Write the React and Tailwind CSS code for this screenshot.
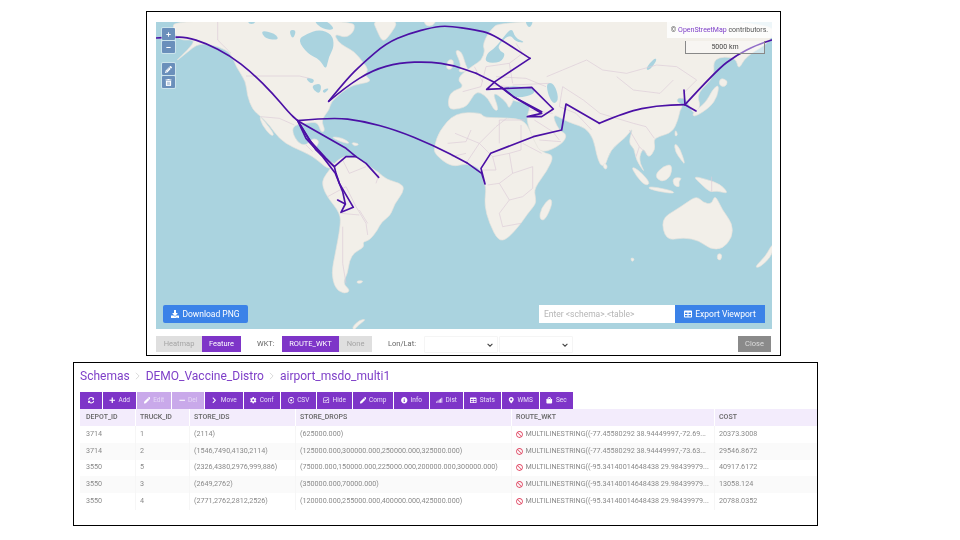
import React from 'react';
import {
  FaBan, FaChevronRight, FaCog, FaDownload, FaInfoCircle, FaMapMarkerAlt, FaMinus, FaPen,
  FaPencilAlt, FaPlus, FaRegCheckSquare, FaRegDotCircle, FaShoppingBag, FaSignal, FaSyncAlt, FaTable, FaTrashAlt,
} from 'react-icons/fa';

const land = [
  // north america
  '85,30 620,30 628,60 600,85 565,70 575,95 600,112 625,125 650,155 668,180 655,195 680,215 620,225 590,245 555,275 550,300 525,330 538,362 525,368 515,335 480,340 445,345 438,365 455,398 480,408 500,383 522,393 505,418 530,440 555,458 570,462 550,482 500,437 440,412 400,387 370,345 345,320 320,300 303,255 300,215 270,170 255,130 220,110 160,98 120,130 85,158 125,120 150,88 100,92 80,60',
  '340,316 355,333 386,374 375,378 348,345',
  '680,30 760,30 732,75 710,98 692,60',
  '832,30 872,30 860,48 840,48',
  '552,380 590,383 615,402 585,396',
  '615,396 642,402 625,410',
  // south america
  '560,465 590,438 630,438 660,463 700,488 720,508 772,523 772,547 745,582 735,615 705,637 695,660 670,692 650,695 655,712 625,727 610,752 605,790 590,820 614,842 595,852 568,836 556,790 568,730 583,650 583,610 543,560 528,525 533,503 548,483',
  '633,812 652,812 646,820 633,820',
  '618,952 640,930 662,927 635,947 625,960',
  // africa
  '927,308 1007,308 1012,323 1082,323 1137,330 1162,385 1187,428 1225,435 1204,482 1164,535 1169,565 1169,582 1144,612 1124,642 1084,687 1057,693 1030,640 1015,585 1020,540 1017,524 1012,515 1005,477 962,459 917,472 865,432 865,408 880,363',
  '1212,563 1220,580 1197,632 1180,627 1185,595',
  // eurasia
  '1067,30 1880,30 1880,93 1800,138 1777,182 1770,140 1700,143 1707,200 1652,250 1664,290 1646,312 1632,295 1622,268 1598,262 1590,275 1612,285 1602,300 1596,330 1579,367 1537,380 1522,390 1529,417 1507,447 1492,410 1477,450 1499,492 1470,450 1465,415 1447,400 1462,350 1442,380 1392,420 1377,472 1357,460 1337,360 1262,335 1217,308 1237,360 1264,373 1249,402 1187,432 1165,395 1140,330 1150,300 1152,281 1092,271 1107,259 1102,271 1089,298 1082,276 1037,241 1059,300 1045,302 1027,266 1002,246 985,250 965,287 940,297 905,298 910,246 957,231 930,206 982,166 1007,151 1017,121 1010,106 1027,66',
  '925,119 947,124 959,166 969,183 935,188 947,166',
  '905,149 924,149 919,178 900,178',
  // japan and islands
  '1719,223 1714,260 1692,292 1645,322 1638,310 1680,278 1700,238',
  '1723,203 1747,213 1737,232 1718,225',
  '1588,358 1596,375 1586,380',
  '1585,398 1602,415 1619,467 1603,447 1588,425',
  '1525,497 1552,468 1579,463 1574,502 1547,517',
  '1455,468 1482,483 1514,520 1497,527 1470,497',
  '1510,528 1584,543 1582,552 1508,538',
  '1580,503 1609,503 1597,515 1602,532 1583,527',
  '1640,498 1682,508 1724,523 1749,552 1712,542 1692,547 1665,522',
  '1545,627 1592,598 1622,578 1652,558 1672,578 1697,583 1707,553 1729,600 1759,640 1759,682 1729,717 1692,717 1660,692 1612,682 1560,692',
  '1715,730 1729,733 1724,752 1713,747',
  '1880,698 1880,735 1842,772 1825,772 1862,735',
  '1375,458 1385,468 1380,480 1370,470',
  '1453,743 1467,746 1458,757',
];

// seas drawn over the land polygons
const water = [
  '455,90 480,72 520,58 558,72 565,110 548,140 540,182 522,148 485,132',
  '476,203 507,206 498,224',
  '498,225 527,220 522,252 503,242',
  '528,240 552,233 535,252',
  '343,60 387,70 400,90 358,87',
  '428,60 452,60 440,90',
  '500,30 540,30 570,60 530,58',
  '305,30 330,30 325,42 308,42',
  '1015,158 1064,158 1079,131 1062,124 1055,106 1092,72 1109,96 1140,98 1107,84 1097,50 1060,98 1040,120 1025,128',
  '1135,30 1164,30 1150,58',
  '1070,232 1100,228 1162,233 1167,252 1120,264 1088,257',
  '1200,218 1224,220 1239,265 1225,284 1208,260',
  '1498,177 1525,143 1534,150 1510,182',
];

const borders = [
  '215,36 215,90 255,130', '300,198 460,198 490,205', '345,320 400,325 445,345', '480,405 500,425',
  // africa, from the coast inward
  '927,370 1000,400 1050,350 1082,325', '1000,400 1040,440 1090,430 1125,420', '962,457 1000,400', '1040,440 1050,480 1012,480',
  '1090,430 1100,490 1060,520 1025,525', '1100,490 1160,470 1160,535', '1060,520 1090,570 1130,560 1160,535', '1090,570 1060,610 1070,650 1125,640',
  '1137,330 1060,330 1060,400', '1130,400 1187,430', '905,400 960,395 975,360', '917,440 960,430', '1125,345 1125,420',
  // south america
  '590,450 610,490 660,470', '545,560 600,530 630,590 660,640 665,675', '585,610 640,615', '590,650 590,760 600,820', '665,640 640,600', '700,490 690,520',
  // europe and asia
  '950,245 1005,230 1020,170', '1020,170 1090,160 1100,220', '1050,200 1140,205 1200,230', '1100,225 1210,220', '985,170 1010,215', '1090,160 1130,130 1110,100', '1040,225 1090,230',
  '1202,200 1250,180 1322,150 1370,180 1442,190 1532,165 1592,170 1652,210 1612,250', '1412,200 1462,240 1542,250 1582,210',
  '1250,230 1312,270 1362,310 1462,340', '1240,290 1290,310 1337,360', '1150,300 1220,310', '1165,330 1220,365 1240,390', '1250,230 1240,290',
  '1450,360 1480,410 1500,430', '1462,340 1500,350 1525,385', '1480,410 1470,440', '1180,390 1245,395',
  '1697,500 1697,545',
];

// great-circle arcs, drawn smooth
const arcs = [
  '30,84 75,82 120,81 180,100 250,135 320,190 380,250 430,310 455,332',
  '548,274 600,210 650,160 720,100 790,70 860,52 905,47 990,60 1032,70 1082,100 1152,145',
  '548,274 600,230 680,180 760,158 850,155 920,165 990,190',
  '455,332 560,322 650,333 750,360 860,405 962,458',
  '1360,340 1442,305 1532,287 1617,284',
  '1617,284 1712,180 1772,135 1832,105 1877,90',
];

// straight legs between stops
const legs = [
  '1152,145 1047,215 1022,238 1157,232 1222,297 1187,320 1144,320 1187,310 1102,260 1067,232',
  '990,190 1042,215 1102,260 1187,305',
  '962,458 1007,490 1017,522 1005,475 1034,430 1162,380 1247,360 1260,282 1360,340',
  '1617,284 1614,240',
  '1617,284 1650,303',
  '455,332 530,375 600,415 630,440 660,460 698,502',
  '455,332 510,420 565,470 600,440 630,440',
  '455,332 490,390 540,445 565,470 570,490 580,520 622,592 585,607 598,582 575,570',
  '455,332 480,385 530,440 568,490 590,545 598,582',
];

const tools = [
  { icon: FaSyncAlt, w: 'w-[22px]' },
  { label: 'Add', icon: FaPlus, w: 'w-[33px]' },
  { label: 'Edit', icon: FaPen, w: 'w-[34px]', off: true },
  { label: 'Del', icon: FaMinus, w: 'w-[32px]', off: true },
  { label: 'Move', icon: FaChevronRight, w: 'w-[38px]' },
  { label: 'Conf', icon: FaCog, w: 'w-[36px]' },
  { label: 'CSV', icon: FaRegDotCircle, w: 'w-[35px]' },
  { label: 'Hide', icon: FaRegCheckSquare, w: 'w-[35px]' },
  { label: 'Comp', icon: FaPen, w: 'w-[40px]' },
  { label: 'Info', icon: FaInfoCircle, w: 'w-[35px]' },
  { label: 'Dist', icon: FaSignal, w: 'w-[33px]' },
  { label: 'Stats', icon: FaTable, w: 'w-[37px]' },
  { label: 'WMS', icon: FaMapMarkerAlt, w: 'w-[37px]' },
  { label: 'Sec', icon: FaShoppingBag, w: 'w-[33px]' },
];

const rows = [
  ['3714', '1', '(2114)', '(625000.000)', 'MULTILINESTRING((-77.45580292 38.94449997,-72.69...', '20373.3008'],
  ['3714', '2', '(1546,7490,4130,2114)', '(125000.000,300000.000,250000.000,325000.000)', 'MULTILINESTRING((-77.45580292 38.94449997,-73.63...', '29546.8672'],
  ['3550', '5', '(2326,4380,2976,999,886)', '(75000.000,150000.000,225000.000,200000.000,300000.000)', 'MULTILINESTRING((-95.34140014648438 29.98439979...', '40917.6172'],
  ['3550', '3', '(2649,2762)', '(350000.000,70000.000)', 'MULTILINESTRING((-95.34140014648438 29.98439979...', '13058.124'],
  ['3550', '4', '(2771,2762,2812,2526)', '(120000.000,255000.000,400000.000,425000.000)', 'MULTILINESTRING((-95.34140014648438 29.98439979...', '20788.0352'],
];

const head = ['DEPOT_ID', 'TRUCK_ID', 'STORE_IDS', 'STORE_DROPS', 'ROUTE_WKT', 'COST'];
const cols = 'grid grid-cols-[55px_54px_106px_216px_203px_103px]';

// rounds a point list off through the midpoints of its edges
function smooth(list, closed) {
  const pts = list.split(' ').map((p) => p.split(',').map(Number));
  const mid = (a, b) => `${(a[0] + b[0]) / 2},${(a[1] + b[1]) / 2}`;
  if (closed) {
    let d = `M${mid(pts[pts.length - 1], pts[0])}`;
    pts.forEach((p, i) => { d += `Q${p[0]},${p[1]} ${mid(p, pts[(i + 1) % pts.length])}`; });
    return `${d}Z`;
  }
  let d = `M${pts[0][0]},${pts[0][1]}`;
  for (let i = 1; i < pts.length - 1; i++) d += `Q${pts[i][0]},${pts[i][1]} ${mid(pts[i], pts[i + 1])}`;
  const last = pts[pts.length - 1];
  return `${d}L${last[0]},${last[1]}`;
}

function MapDrawing() {
  return (
    <svg viewBox="30 36 1848 921" className="block h-full w-full">
      <rect x="30" y="36" width="1848" height="921" fill="#aad3df" />
      {land.map((p) => <path key={p} d={smooth(p, true)} fill="#f2efe9" stroke="#e6e3dc" strokeWidth="2" />)}
      {water.map((p) => <path key={p} d={smooth(p, true)} fill="#aad3df" />)}
      {borders.map((p) => <polyline key={p} points={p} fill="none" stroke="#dccbd8" strokeWidth="2" />)}
      {arcs.map((p) => <path key={p} d={smooth(p, false)} fill="none" stroke="#4b10a5" strokeWidth="5" strokeLinecap="round" />)}
      {legs.map((p) => <polyline key={p} points={p} fill="none" stroke="#4b10a5" strokeWidth="5" strokeLinejoin="round" strokeLinecap="round" />)}
    </svg>
  );
}

function MapButton({ children }) {
  return <span className="flex h-[12px] w-[13px] items-center justify-center rounded-[1px] bg-[#6a8fbb] text-[7px] text-white">{children}</span>;
}

function MapPanel() {
  return (
    <div className="relative h-[307px] w-[616px] overflow-hidden">
      <MapDrawing />
      <div className="absolute left-[5px] top-[5px] flex flex-col gap-px rounded-[2px] bg-white/40 p-px">
        <MapButton><FaPlus className="h-[5px] w-[5px]" /></MapButton>
        <MapButton><FaMinus className="h-[5px] w-[5px]" /></MapButton>
      </div>
      <div className="absolute left-[5px] top-[40px] flex flex-col gap-px rounded-[2px] bg-white/40 p-px">
        <MapButton><FaPencilAlt className="h-[7px] w-[7px]" /></MapButton>
        <MapButton><FaTrashAlt className="h-[7px] w-[7px]" /></MapButton>
      </div>
      <div className="absolute right-0 top-0 flex h-[16px] w-[105px] items-center justify-center bg-white/80 text-[7px] text-[#555]">
        <span>© <span className="text-[#7e3fc8]">OpenStreetMap</span> contributors.</span>
      </div>
      <div className="absolute left-[529px] top-[19px] flex h-[13px] w-[80px] items-center justify-center border border-t-0 border-[#888] bg-white/40 text-[7px] text-[#444]">5000 km</div>
      <button className="absolute bottom-[6px] left-[7px] flex h-[18px] w-[85px] items-center justify-center gap-[3px] rounded-[2px] bg-[#3b82e8] text-[8.5px] text-white">
        <FaDownload className="h-[8px] w-[8px]" />Download PNG
      </button>
      <div className="absolute bottom-[6px] right-[7px] flex h-[18px]">
        <div className="flex w-[136px] items-center bg-white px-[5px] text-[8.5px] text-[#b5b5b5]">Enter &lt;schema&gt;.&lt;table&gt;</div>
        <button className="flex w-[90px] items-center justify-center gap-[3px] bg-[#3b82e8] text-[8.5px] text-white">
          <FaTable className="h-[8px] w-[8px]" />Export Viewport
        </button>
      </div>
    </div>
  );
}

function Select({ w }) {
  return (
    <div className={`flex h-[17px] items-center justify-end rounded-[1px] border border-[#f5f5f5] bg-white pr-[4px] text-[#444] ${w}`}>
      <svg viewBox="0 0 10 6" className="h-[4px] w-[6px]"><path d="M1 1l4 4 4-4" fill="none" stroke="currentColor" strokeWidth="1.8" /></svg>
    </div>
  );
}

function BottomBar() {
  return (
    <div className="flex h-[26px] items-start pt-[7px] text-[7.5px]">
      <span className="flex h-[16px] w-[46px] items-center justify-center bg-[#dfdfdf] text-[#a5a5a5]">Heatmap</span>
      <span className="flex h-[16px] w-[39px] items-center justify-center bg-[#7e35c8] text-white">Feature</span>
      <span className="ml-[16px] flex h-[16px] w-[25px] items-center text-[#666]">WKT:</span>
      <span className="flex h-[16px] w-[57px] items-center justify-center bg-[#7e35c8] text-white">ROUTE_WKT</span>
      <span className="flex h-[16px] w-[33px] items-center justify-center bg-[#dfdfdf] text-[#a5a5a5]">None</span>
      <span className="ml-[16px] flex h-[16px] w-[36px] items-center text-[#666]">Lon/Lat:</span>
      <Select w="w-[74px]" />
      <Select w="ml-px w-[74px]" />
      <span className="ml-auto flex h-[16px] w-[33px] items-center justify-center bg-[#8a8a8a] text-[#ddd]">Close</span>
    </div>
  );
}

function Toolbar() {
  return (
    <div className="flex h-[17px] gap-px">
      {tools.map(({ label, icon: Icon, w, off }, i) => (
        <span key={i} className={`flex items-center justify-center gap-[3px] text-[6.5px] ${w} ${off ? 'bg-[#c9a9ea] text-[#e6d8f6]' : 'bg-[#7e35c8] text-[#e8dcf7]'}`}>
          <Icon className="h-[6.5px] w-[6.5px] text-white" />
          {label}
        </span>
      ))}
    </div>
  );
}

function Table() {
  return (
    <div className="w-[737px] text-[7.2px] text-[#8a8a8a]">
      <div className={`${cols} h-[17px] items-center bg-[#f3ecfc] text-[7px] font-medium text-[#666]`}>
        {head.map((h, i) => <div key={h} className={`flex h-full items-center ${i ? 'border-l border-white pl-[4px]' : 'pl-[6px]'}`}>{h}</div>)}
      </div>
      {rows.map((row, r) => (
        <div key={r} className={`${cols} h-[16.75px] items-center ${r % 2 ? 'bg-[#fafafa]' : 'bg-white'}`}>
          {row.map((cell, i) => (
            <div key={i} className={`flex h-full items-center whitespace-nowrap ${i ? 'border-l border-[#f6f6f6] pl-[4px]' : 'pl-[6px]'}`}>
              {i === 4 && <FaBan className="mr-[2.5px] h-[7px] w-[7px] shrink-0 text-[#e2526c]" />}
              {cell}
            </div>
          ))}
        </div>
      ))}
    </div>
  );
}

function Crumb() {
  return <svg viewBox="0 0 6 10" className="h-[8px] w-[5px] text-[#d0d0d0]"><path d="M1 1l4 4-4 4" fill="none" stroke="currentColor" strokeWidth="1" /></svg>;
}

export default function App() {
  return (
    <div className="h-[540px] w-[960px] overflow-hidden bg-white pt-[11px] font-['Roboto',sans-serif] blur-[0.5px]">
      <div className="ml-[146px] h-[345px] w-[635px] border border-black pl-[9px] pr-[9px] pt-[10px]">
        <MapPanel />
        <BottomBar />
      </div>
      <div className="ml-[73px] mt-[6px] h-[164px] w-[745px] border border-black pl-[6px]">
        <div className="flex h-[29px] items-center gap-[5.5px] pb-[4px] text-[12px] text-[#7e3fc8]">
          <span>Schemas</span>
          <Crumb />
          <span>DEMO_Vaccine_Distro</span>
          <Crumb />
          <span>airport_msdo_multi1</span>
        </div>
        <Toolbar />
        <Table />
      </div>
    </div>
  );
}
